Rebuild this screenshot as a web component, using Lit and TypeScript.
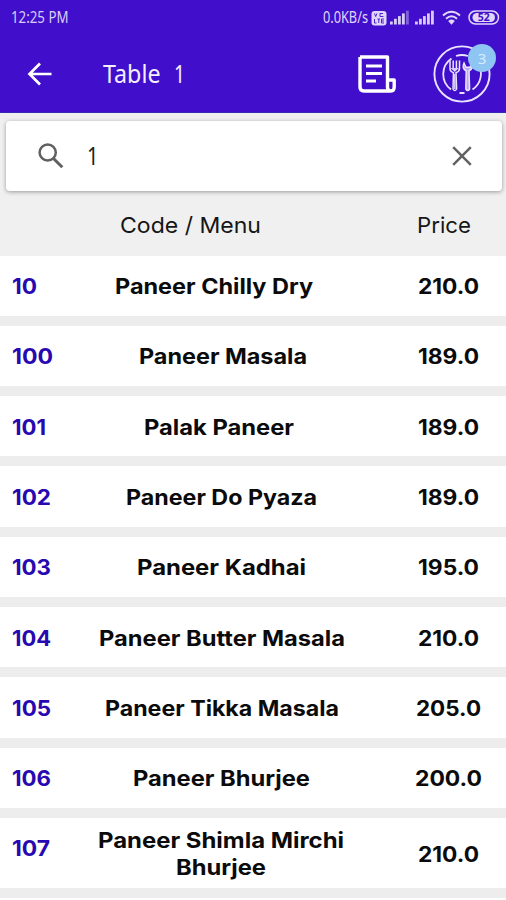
import { LitElement, html, svg, css } from "lit";
import { customElement, property } from "lit/decorators.js";

/** One line of text set to an exact width, baseline at a given share of its box. */
@customElement("fit-text")
class FitText extends LitElement {
  @property() text = "";
  @property({ type: Number }) width = 50;
  @property({ type: Number }) height = 27;
  @property({ type: Number }) base = 22;
  static styles = css`
    :host { display: block; flex: none; }
    svg { display: block; overflow: visible; fill: currentColor; }
    text { white-space: pre; }
  `;
  render() {
    return html`<svg width=${this.width} height=${this.height}>
      ${svg`<text x="0" y=${this.base} textLength=${this.width} lengthAdjust="spacingAndGlyphs">${this.text}</text>`}
    </svg>`;
  }
}

interface Line { text: string; width: number; }
interface Dish { code: string; codeWidth: number; lines: Line[]; price: string; priceWidth: number; }

const dish = (code: string, codeWidth: number, lines: Line[], price: string, priceWidth: number): Dish =>
  ({ code, codeWidth, lines, price, priceWidth });

const dishes: Dish[] = [
  dish("10", 25, [{ text: "Paneer Chilly Dry", width: 198 }], "210.0", 61),
  dish("100", 41, [{ text: "Paneer Masala", width: 168 }], "189.0", 61),
  dish("101", 34, [{ text: "Palak Paneer", width: 150 }], "189.0", 61),
  dish("102", 39, [{ text: "Paneer Do Pyaza", width: 191 }], "189.0", 61),
  dish("103", 39, [{ text: "Paneer Kadhai", width: 169 }], "195.0", 61),
  dish("104", 39, [{ text: "Paneer Butter Masala", width: 246 }], "210.0", 61),
  dish("105", 39, [{ text: "Paneer Tikka Masala", width: 234 }], "205.0", 65),
  dish("106", 39, [{ text: "Paneer Bhurjee", width: 177 }], "200.0", 67),
  dish("107", 38, [{ text: "Paneer Shimla Mirchi", width: 246 }, { text: "Bhurjee", width: 90 }], "210.0", 61),
];

@customElement("app-root")
class AppRoot extends LitElement {
  static styles = css`
    :host { display: block; width: 506px; height: 900px; overflow: hidden; background: #f0f0f0; color: #0b0b0b; font-family: Inter, "Noto Sans", sans-serif; }
    svg { display: block; flex: none; }
    .top { height: 113px; background: #410fcb; border-bottom: 1px solid #342bb2; box-sizing: border-box; color: #f3efff; font-family: "Noto Sans", sans-serif; }
    .status { height: 35px; display: flex; align-items: center; justify-content: space-between; padding: 0 6px 0 11px; box-sizing: border-box; }
    .clock { font-size: 16px; color: #d9cdf8; }
    .signals { display: flex; align-items: center; color: #e0d6fa; }
    .speed { font-size: 15.5px; margin-right: 3px; }
    .first { margin-left: 3px; }
    .second { margin-left: 5px; }
    .wifi, .battery { margin-left: 7px; }
    .bar { height: 77px; display: flex; align-items: center; padding: 0 14px 0 26px; }
    .title { font-size: 25px; margin-left: 49px; display: flex; gap: 13.5px; flex: 1; }
    .bill { margin-right: 36px; }
    .plate { position: relative; width: 60px; height: 60px; }
    .badge { position: absolute; right: -4px; top: 0; width: 28px; height: 28px; border-radius: 50%; background: #8fc5f2; color: #d8ecff; display: flex; align-items: center; justify-content: center; font-size: 15px; }
    .search { margin: 8px 4.5px 0 6px; height: 69.5px; border-radius: 4px; background: #fff; box-shadow: 0 1px 4px rgba(0,0,0,.36); display: flex; align-items: center; padding: 0 30px 0 32px; box-sizing: border-box; }
    .query { flex: 1; font: 25px "Noto Sans", sans-serif; color: #222; padding-left: 22.5px; }
    .head { height: 65px; display: flex; align-items: center; font-size: 22px; color: #161616; padding-top: 3px; box-sizing: border-box; }
    .head .menu { padding-left: 119.5px; flex: 1; }
    .head .price { width: 89.5px; flex: none; justify-content: flex-start; }
    .list { display: flex; flex-direction: column; gap: 10px; background: #ededed; }
    .row { min-height: 60.3px; display: flex; background: #fff; align-items: center; font-size: 21.3px; font-weight: 700; box-sizing: border-box; padding-left: 12px; }
    .code { color: #2808b0; align-self: flex-start; padding-top: 16.6px; }
    .name { flex: 1; display: flex; flex-direction: column; align-items: center; padding-left: 1px; }
    .row:first-child .name { padding-left: 0; }
    .tall { min-height: 70.3px; }
    .price { width: 114.5px; display: flex; justify-content: center; }
    .rest { height: 20px; background: #fff; }
  `;

  private signal(bright: number) {
    return svg`${[0, 1, 2, 3, 4].map((i) => svg`<rect x=${i * 4} y=${11.5 - i * 2.7} width="2.8" height=${3 + i * 2.7} fill="currentColor" opacity=${i < bright ? 0.95 : 0.4}/>`)}`;
  }

  render() {
    return html`
      <header class="top">
        <div class="status">
          <fit-text class="clock" text="12:25 PM" width="57.5" height="20" base="15.3"></fit-text>
          <div class="signals">
            <fit-text class="speed" text="0.0KB/s" width="45" height="20" base="15"></fit-text>
            <svg width="16" height="16" viewBox="0 0 16 16"><rect x=".5" y="1" width="15" height="14.5" rx="3" fill="currentColor"/><path d="M3.5 3.5l1.200 3 1.200-3M9 3.200v3.300h3.500M9 3.500h3M3.500 9v4h2M6.500 9h2.500M7.800 9v4M13 9h-2.500v4H13M10.500 11H13" fill="none" stroke="#410fcb" stroke-width=".9"/></svg>
            <svg class="first" width="20" height="15">${this.signal(4)}</svg>
            <svg class="second" width="20" height="15">${this.signal(5)}</svg>
            <svg class="wifi" width="19" height="15" viewBox="0 0 19 15"><g fill="none" stroke="currentColor" stroke-width="2"><path d="M1 5.500Q9.500-2 18 5.500"/><path d="M4 8.700Q9.500 3.700 15 8.700"/></g><path d="M6.200 11Q9.500 8.200 12.800 11L9.500 14.700z" fill="currentColor"/></svg>
            <svg class="battery" width="32" height="15" viewBox="0 0 32 15"><rect x="1" y="1" width="29.500" height="13" rx="6.500" fill="none" stroke="currentColor" stroke-width="1.500"/><rect x="4.500" y="3" width="22.500" height="9" rx="4.500" fill="currentColor"/><text x="15.800" y="11.300" text-anchor="middle" font-size="10.500" font-weight="700" fill="#410fcb">52</text></svg>
          </div>
        </div>
        <div class="bar">
          <svg width="28" height="28" viewBox="0 0 28 28"><path d="M25.500 14H4M14 3.500l-10.500 10.500 10.500 10.500" fill="none" stroke="#fff" stroke-width="2.700"/></svg>
          <div class="title">
            <fit-text text="Table" width="57.5" height="32" base="24.5"></fit-text>
            <fit-text text="1" width="11" height="32" base="24.5"></fit-text>
          </div>
          <svg class="bill" width="39" height="40" viewBox="0 0 39 40"><path d="M3 3H30.500V33.500Q30.500 37 34 37Q37.200 37 37.200 33V26H31M34 37H7Q3 37 3 33V3" fill="none" stroke="#fff" stroke-width="3.400" stroke-linejoin="round"/><path d="M9 12H25M9 19.500H25M9 27H19" stroke="#fff" stroke-width="3.200"/></svg>
          <div class="plate">
            <svg width="60" height="60" viewBox="0 0 60 60" fill="none" stroke="#e9e3ff">
              <circle cx="30" cy="30" r="27.600" stroke-width="1.900"/>
              <path d="M19.500 14.500A19 19 0 0 0 19 45.500M40.500 45.500A19 19 0 0 0 46 19.500M24 12A19 19 0 0 1 36 12M27.500 49h5" stroke-width="1.800"/>
              <path d="M18 16.500v8q0 3 3.500 4.200L21 45q1.800 3.200 3.600 0L24 28.700q3.500-1.200 3.500-4.200v-8M21.200 16.500v8M24.400 16.500v8" stroke-width="1.500"/>
              <path d="M22 30v15h1.700V30z" fill="#cfc3f5" stroke="none"/>
              <path d="M18.500 24h8.500l-4.200 4z" fill="#d8ccfa" stroke="none"/>
              <path d="M32 19q-2.500 5 2.200 8L33.800 45q1.900 3.200 3.800 0L37 27q5-3 2.800-8l-1.800 4.200h-4z" fill="#b9a9ef" stroke-width="1.500"/>
            </svg>
            <span class="badge">3</span>
          </div>
        </div>
      </header>
      <div class="search">
        <svg width="26" height="26" viewBox="0 0 26 26" fill="none" stroke="#606060"><circle cx="9.700" cy="9.500" r="8.100" stroke-width="2.500"/><path d="M15.500 15.500L24.300 24.300" stroke-width="3"/></svg>
        <div class="query"><fit-text text="1" width="11.5" height="34" base="25.5"></fit-text></div>
        <svg width="20" height="20" viewBox="0 0 20 20"><path d="M1.200 1.200L18.800 18.800M18.800 1.200L1.200 18.800" stroke="#626262" stroke-width="2.500"/></svg>
      </div>
      <div class="head">
        <div class="menu"><fit-text text="Code / Menu" width="141"></fit-text></div>
        <div class="price"><fit-text text="Price" width="54"></fit-text></div>
      </div>
      <main class="list">
        ${dishes.map((d) => html`
          <section class="row ${d.lines.length > 1 ? "tall" : ""}">
            <fit-text class="code" .text=${d.code} .width=${d.codeWidth}></fit-text>
            <div class="name">${d.lines.map((l) => html`<fit-text .text=${l.text} .width=${l.width}></fit-text>`)}</div>
            <div class="price"><fit-text .text=${d.price} .width=${d.priceWidth}></fit-text></div>
          </section>`)}
        <div class="rest"></div>
      </main>`;
  }
}
